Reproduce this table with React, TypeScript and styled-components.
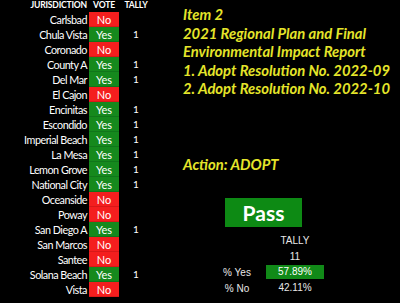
import * as React from 'react';
import styled, { createGlobalStyle } from 'styled-components';

type Row = { name: string; yes: boolean };

const rows: Row[] = [
    { name: 'Carlsbad', yes: false },
    { name: 'Chula Vista', yes: true },
    { name: 'Coronado', yes: false },
    { name: 'County A', yes: true },
    { name: 'Del Mar', yes: true },
    { name: 'El Cajon', yes: false },
    { name: 'Encinitas', yes: true },
    { name: 'Escondido', yes: true },
    { name: 'Imperial Beach', yes: true },
    { name: 'La Mesa', yes: true },
    { name: 'Lemon Grove', yes: true },
    { name: 'National City', yes: true },
    { name: 'Oceanside', yes: false },
    { name: 'Poway', yes: false },
    { name: 'San Diego A', yes: true },
    { name: 'San Marcos', yes: false },
    { name: 'Santee', yes: false },
    { name: 'Solana Beach', yes: true },
    { name: 'Vista', yes: false },
];

const item = [
    'Item 2',
    '2021 Regional Plan and Final',
    'Environmental Impact Report',
    '1. Adopt Resolution No. 2022-09',
    '2. Adopt Resolution No. 2022-10',
];

const GlobalStyle = createGlobalStyle`
    html, body {
        margin: 0;
        padding: 0;
        background: #000;
    }
    body {
        width: 400px;
        height: 303px;
        overflow: hidden;
    }
`;

export default function App() {
    return (
        <>
            <GlobalStyle />
            <Screen>
                <Table>
                    <Head $align="right">JURISDICTION</Head>
                    <Head $align="center">VOTE</Head>
                    <Head $align="center">TALLY</Head>
                    {rows.map((r) => (
                        <React.Fragment key={r.name}>
                            <Name>{r.name}</Name>
                            <Vote $yes={r.yes}>{r.yes ? 'Yes' : 'No'}</Vote>
                            <Tally>{r.yes ? '1' : ''}</Tally>
                        </React.Fragment>
                    ))}
                </Table>
                <Side>
                    <Agenda>
                        {item.map((line) => (
                            <div key={line}>{line}</div>
                        ))}
                    </Agenda>
                    <Action>Action: ADOPT</Action>
                    <Result>Pass</Result>
                    <Summary>
                        <span />
                        <Value>TALLY</Value>
                        <span />
                        <Value>11</Value>
                        <Label>% Yes</Label>
                        <Value $box>57.89%</Value>
                        <Label>% No</Label>
                        <Value>42.11%</Value>
                    </Summary>
                </Side>
            </Screen>
        </>
    );
}

const Screen = styled.div`
    display: flex;
    width: 400px;
    height: 303px;
    background: #000;
    color: #fff;
`;

const Table = styled.div`
    display: grid;
    grid-template-columns: 89px 30px 34px;
    grid-auto-rows: 15px;
    grid-template-rows: 12px;
    align-content: start;
    font-family: Lato, 'Open Sans', sans-serif;
`;

const Head = styled.div<{ $align: 'right' | 'center' }>`
    font-size: 8.6px;
    font-weight: 700;
    line-height: 11px;
    text-align: ${(p) => p.$align};
    padding-right: ${(p) => (p.$align === 'right' ? '2px' : '0')};
    letter-spacing: -0.2px;
`;

const Name = styled.div`
    font-size: 10.8px;
    line-height: 15px;
    letter-spacing: -0.5px;
    text-align: right;
    padding-right: 2px;
    white-space: nowrap;
`;

const Vote = styled.div<{ $yes: boolean }>`
    background: ${(p) => (p.$yes ? '#15891d' : '#f41e1e')};
    font-size: 11px;
    line-height: 15px;
    text-align: center;
    border-bottom: 1px solid ${(p) => (p.$yes ? '#10761a' : '#d81818')};
    box-sizing: border-box;
`;

const Tally = styled.div`
    font-size: 10px;
    line-height: 15px;
    text-align: center;
`;

const Side = styled.div`
    display: flex;
    flex-direction: column;
    padding-left: 30px;
    padding-top: 5px;
`;

const Agenda = styled.div`
    color: #e5e52a;
    font-family: Lato, 'Open Sans', sans-serif;
    font-weight: 700;
    font-style: italic;
    font-size: 14.8px;
    line-height: 18.5px;
    white-space: nowrap;
`;

const Action = styled(Agenda)`
    margin-top: 57px;
`;

const Result = styled.div`
    align-self: flex-start;
    margin: 25px 0 0 42px;
    width: 77px;
    height: 29px;
    background: #0d8a14;
    color: #fff;
    font-family: Lato, 'Open Sans', sans-serif;
    font-weight: 700;
    font-size: 21px;
    line-height: 29px;
    text-align: center;
`;

const Summary = styled.div`
    display: grid;
    grid-template-columns: 50px 58px;
    column-gap: 4px;
    grid-auto-rows: 15.5px;
    margin: 7px 0 0 29px;
    font-family: 'Liberation Sans', Arial, sans-serif;
    font-size: 10px;
    color: #e8e8e8;
`;

const Label = styled.div`
    line-height: 15px;
    text-align: center;
`;

const Value = styled.div<{ $box?: boolean }>`
    line-height: 14px;
    height: 14px;
    text-align: center;
    background: ${(p) => (p.$box ? '#118a18' : 'transparent')};
    color: ${(p) => (p.$box ? '#fff' : '#e8e8e8')};
`;
